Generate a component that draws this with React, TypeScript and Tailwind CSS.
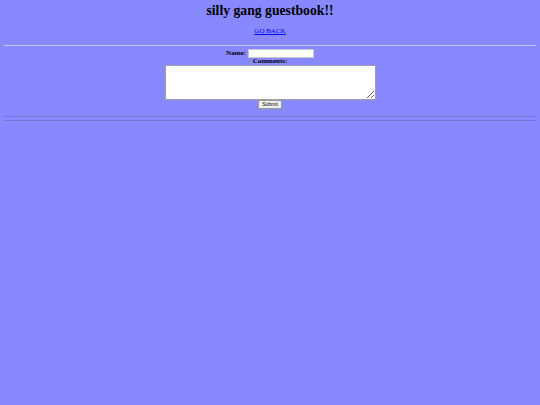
export default function App() {
  return (
    <div className="min-h-screen bg-[#8888ff] px-[4px] pt-[3px] font-['Liberation_Serif',serif] text-black">
      <h1 className="text-center text-[13.7px] font-bold leading-[16px]">silly gang guestbook!!</h1>

      <div className="mt-[8px] text-center text-[7px] leading-[8px]">
        <a href="#" className="text-[#0000ee] underline">GO BACK</a>
      </div>

      <div className="mt-[10px] h-px bg-[#c4c4ff]" />

      <form className="flex flex-col items-center pt-[2px]">
        <div className="flex h-[10px] items-center gap-[2px]">
          <label className="text-[7px] font-bold leading-[8px]">Name:</label>
          <input type="text" className="h-[9px] w-[66px] border border-[#c8c8c8] bg-white" />
        </div>
        <label className="text-[7px] font-bold leading-[7px]">Comments:</label>
        <textarea className="h-[35px] w-[211px] resize border border-[#a0a0a0] bg-white" />
        <button
          type="button"
          className="flex h-[9px] w-[24px] items-center justify-center border border-[#9a9a9a] bg-[#efefef] font-['Liberation_Sans',sans-serif] text-[5px] leading-none"
        >
          Submit
        </button>
      </form>

      <div className="mt-[7px] h-px bg-[#7676d4]" />
      <div className="mt-[3px] h-px bg-[#7676d4]" />
    </div>
  )
}
